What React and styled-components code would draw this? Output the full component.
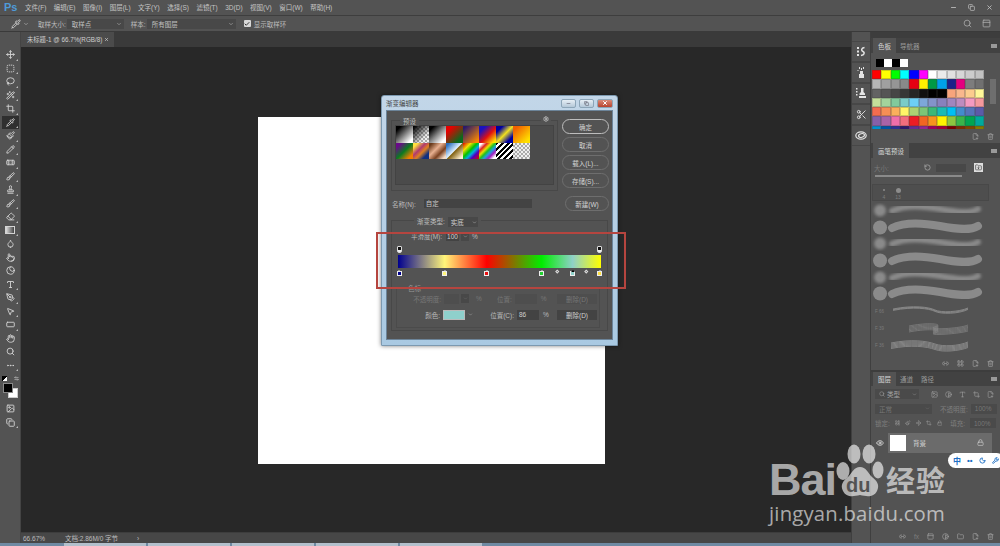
import React from 'react'
import styled, { createGlobalStyle } from 'styled-components'
import {
  Move, SquareDashed, Lasso, WandSparkles, Crop, Pipette, Paintbrush, Pencil, Bandage, Brush,
  Stamp, Eraser, Droplet, Pointer, Eclipse, Type, PenTool, MousePointer2, RectangleHorizontal,
  Hand, Search, Ellipsis, ChevronDown, Settings, Minus, Copy, X, Eye, Lock, Link2, Trash2,
  Folder, FilePlus2, RotateCcw, Moon, Wrench, PanelTop, LayoutGrid, Contrast,
  Image as ImageIcon, Scissors, ArrowLeftRight, FolderDown, Check,
} from 'lucide-react'

const GlobalStyle = createGlobalStyle`
  html, body {
    margin: 0;
    width: 1000px;
    height: 546px;
    overflow: hidden;
    background: #535353;
    font-family: "Liberation Sans", "Noto Sans CJK SC", sans-serif;
    font-size: 6.5px;
    color: #c8c8c8;
  }
  * { box-sizing: border-box; }
`

const Shell = styled.div`
  position: relative;
  width: 1000px;
  height: 546px;
  display: flex;
  flex-direction: column;
  overflow: hidden;
`

const MenuBar = styled.div`
  height: 16px;
  flex: none;
  display: flex;
  align-items: center;
  padding-left: 4px;
  border-bottom: 1px solid #3e3e3e;
`
const PsLogo = styled.b`
  width: 21px;
  font-size: 11px;
  line-height: 1;
  color: #4f9bd9;
`
const MenuList = styled.div`
  display: flex;
  align-items: baseline;
  gap: 7.5px;
  flex: 1;
`
const MenuItem = styled.span`
  white-space: nowrap;
  line-height: 10px;
  color: #c4c4c4;
`
const WindowButtons = styled.div`
  display: flex;
  gap: 11px;
  padding-right: 7px;
  color: #bdbdbd;
`

const OptionsBar = styled.div`
  height: 16px;
  flex: none;
  display: flex;
  align-items: center;
  padding-left: 11px;
  border-bottom: 1px solid #3a3a3a;
`
const OptionLabel = styled.span`
  white-space: nowrap;
  margin-left: ${p => p.$left || 0}px;
  color: #bcbcbc;
`
const OptionSelect = styled.div`
  width: ${p => p.$w}px;
  height: 10px;
  margin-left: 1px;
  padding: 0 2px 0 5px;
  display: flex;
  align-items: center;
  justify-content: space-between;
  background: #484848;
  color: #c0c0c0;
`
const CheckMark = styled.span`
  width: 7px;
  height: 7px;
  margin: 0 3px 0 8px;
  display: flex;
  align-items: center;
  justify-content: center;
  border-radius: 1px;
  background: #d8d8d8;
  color: #333;
`
const OptionsEnd = styled.div`
  margin-left: auto;
  display: flex;
  align-items: center;
  gap: 10px;
  padding-right: 9px;
  color: #b0b0b0;
`

const Main = styled.div`
  flex: 1;
  min-height: 0;
  display: grid;
  grid-template-columns: 21px 830px 20px 129px;
`

const ToolBar = styled.div`
  display: flex;
  flex-direction: column;
  align-items: center;
  padding-top: 16px;
  background: #535353;
  border-right: 1px solid #444;
`
const ToolSlot = styled.div`
  position: relative;
  width: 17px;
  height: 13.5px;
  flex: none;
  display: flex;
  align-items: center;
  justify-content: center;
  color: #d4d4d4;
  background: ${p => (p.$active ? '#2f2f2f' : 'transparent')};
  &::after {
    content: '';
    position: absolute;
    right: 1px;
    bottom: 1px;
    border-left: 2px solid transparent;
    border-bottom: 2px solid #bbb;
    display: ${p => (p.$more ? 'block' : 'none')};
  }
`
const GradientGlyph = styled.span`
  width: 10px;
  height: 8px;
  border: 1px solid #d4d4d4;
  background: linear-gradient(90deg, #ddd, #444);
`
const SwapRow = styled.div`
  width: 17px;
  height: 8px;
  margin-top: 2px;
  display: flex;
  align-items: center;
  justify-content: space-between;
  color: #d0d0d0;
`
const MiniDefault = styled.span`
  width: 5px;
  height: 5px;
  background: linear-gradient(135deg, #000 50%, #fff 50%);
`
const ColorChips = styled.div`
  position: relative;
  width: 15px;
  height: 15px;
  margin: 1px 0 4px;
`
const ColorChip = styled.span`
  position: absolute;
  width: 10px;
  height: 10px;
  border: 1px solid ${p => (p.$fore ? '#888' : '#ccc')};
  background: ${p => (p.$fore ? '#000' : '#fff')};
  top: ${p => (p.$fore ? 0 : 5)}px;
  left: ${p => (p.$fore ? 0 : 5)}px;
  z-index: ${p => (p.$fore ? 1 : 0)};
`

const Center = styled.div`
  display: flex;
  flex-direction: column;
  min-width: 0;
`
const TabStrip = styled.div`
  height: 15px;
  flex: none;
  display: flex;
  background: #3a3a3a;
`
const DocTab = styled.div`
  width: 93px;
  display: flex;
  align-items: center;
  justify-content: space-between;
  padding: 0 5px 0 6px;
  background: #4b4b4b;
  color: #cfcfcf;
  font-size: 6.3px;
  white-space: nowrap;
`
const CanvasArea = styled.div`
  flex: 1;
  min-height: 0;
  padding: 70px 0 0 237px;
  background: #282828;
`
const Page = styled.div`
  width: 347px;
  height: 347px;
  background: #fff;
`
const StatusBar = styled.div`
  height: 11px;
  flex: none;
  display: flex;
  align-items: center;
  padding-left: 2px;
  background: #474747;
  border-top: 1px solid #3d3d3d;
  color: #bdbdbd;
`
const StatusPart = styled.span`
  width: ${p => p.$w}px;
  white-space: nowrap;
`

const Dock = styled.div`
  padding-top: 9px;
  background: #535353;
  border-left: 1px solid #3f3f3f;
  border-right: 1px solid #3f3f3f;
`
const DockButton = styled.div`
  height: 21px;
  display: flex;
  align-items: center;
  justify-content: center;
  border-top: 1px solid #474747;
  border-bottom: 1px solid #474747;
  color: #e4e4e4;
`

const Panels = styled.div`
  display: flex;
  flex-direction: column;
  padding-top: 6px;
  background: #3d3d3d;
`
const Panel = styled.div`
  height: ${p => p.$h}px;
  flex: none;
  display: flex;
  flex-direction: column;
  background: #535353;
  margin-bottom: ${p => p.$gap || 0}px;
`
const PanelTabs = styled.div`
  height: ${p => p.$h || 15}px;
  flex: none;
  display: flex;
  align-items: stretch;
  padding-left: 2px;
  background: #424242;
`
const PanelTab = styled.div`
  display: flex;
  align-items: center;
  padding: 0 ${p => p.$pad || 4}px;
  background: ${p => (p.$active ? '#535353' : 'transparent')};
  color: ${p => (p.$active ? '#d8d8d8' : '#9a9a9a')};
  white-space: nowrap;
`
const PanelMenu = styled.span`
  width: 6px;
  height: 4px;
  margin: auto 3px auto auto;
  background: #9a9a9a;
`
const PanelFooter = styled.div`
  height: 13px;
  flex: none;
  display: flex;
  justify-content: flex-end;
  align-items: center;
  gap: 8px;
  padding-right: 6px;
  margin-top: auto;
  color: #a8a8a8;
`

const DefaultSwatches = styled.div`
  display: flex;
  padding: 6px 0 3px 5px;
`
const MainSwatch = styled.span`
  width: 8px;
  height: 8px;
  background: ${p => p.$c};
`
const SwatchWrap = styled.div`
  display: flex;
  height: 59px;
`
const SwatchGrid = styled.div`
  width: 112px;
  margin-left: 1px;
  height: 59px;
  overflow: hidden;
  display: grid;
  grid-template-columns: repeat(12, 1fr);
  grid-auto-rows: 9.3px;
`
const Swatch = styled.span`
  background: ${p => p.$c};
  border: 0.5px solid rgba(60, 60, 60, .25);
`
const ScrollTrack = styled.div`
  width: 6px;
  margin-left: 6px;
  padding-top: 9px;
`
const ScrollThumb = styled.div`
  height: ${p => p.$h}px;
  background: #6e6e6e;
`

const SizeRow = styled.div`
  height: 17px;
  display: flex;
  align-items: center;
  padding: 2px 0 0 3px;
  color: #787878;
`
const ResetIcon = styled.span`
  margin-left: 35px;
  display: flex;
  color: #aaa;
`
const SizeField = styled.span`
  width: 30px;
  height: 8px;
  margin-left: 5px;
  background: #484848;
`
const FolderChip = styled.span`
  width: 9px;
  height: 9px;
  margin-left: 8px;
  display: flex;
  align-items: center;
  justify-content: center;
  background: #ddd;
  color: #333;
`
const SliderLine = styled.div`
  width: 87px;
  height: 2px;
  margin: 0 0 7px 4px;
  background: #8a8a8a;
`
const Thumbs = styled.div`
  width: 117px;
  height: 17px;
  margin-left: 1px;
  display: flex;
  gap: 6px;
  padding: 2px 0 0 7px;
  border: 1px solid #484848;
  background: #4e4e4e;
  color: #7d7d7d;
  font-size: 5px;
`
const ThumbCell = styled.div`
  display: flex;
  flex-direction: column;
  align-items: center;
  gap: 1px;
  width: 8px;
`
const ThumbDot = styled.span`
  width: ${p => p.$s}px;
  height: ${p => p.$s}px;
  margin: ${p => (6 - p.$s) / 2}px 0;
  border-radius: 50%;
  background: #8c8c8c;
`
const BrushList = styled.div`
  height: 153px;
  padding-top: 1px;
  overflow: hidden;
`

const SearchRow = styled.div`
  height: 14.5px;
  display: flex;
  align-items: center;
  gap: ${p => p.$gap || 6}px;
  padding: 2px 4px;
  color: #a0a0a0;
  overflow: hidden;
`
const TabGap = styled.div`
  height: 1px;
  flex: none;
`
const SmallField = styled.div`
  width: ${p => p.$w}px;
  height: 10px;
  flex: none;
  display: flex;
  align-items: center;
  justify-content: space-between;
  padding: 0 2px 0 4px;
  margin-right: ${p => p.$after || 0}px;
  background: #4a4a4a;
  color: ${p => (p.$dim ? '#777' : '#a2a2a2')};
  white-space: nowrap;
`
const FieldLabel = styled.span`
  display: flex;
  align-items: center;
  gap: 2px;
`
const DimLabel = styled.span`
  color: #7e7e7e;
  white-space: nowrap;
  margin-left: ${p => p.$left || 0}px;
`
const LayerRow = styled.div`
  height: 20px;
  margin-top: 2px;
  display: flex;
  align-items: center;
`
const EyeCell = styled.span`
  width: 17px;
  display: flex;
  justify-content: center;
  color: #dcdcdc;
`
const LayerBody = styled.div`
  width: 104px;
  height: 100%;
  display: flex;
  align-items: center;
  justify-content: flex-start;
  padding: 0 8px 0 2px;
  background: #6b6b6b;
  color: #d6d6d6;
`
const LayerThumb = styled.span`
  width: 16px;
  height: 16px;
  margin-right: 7px;
  background: #fff;
`
const LayerName = styled.span`
  flex: 1;
`

const Taskbar = styled.div`
  height: 3px;
  flex: none;
  display: flex;
  padding-left: 64px;
  gap: 2px;
  background: #6f8aa3;
`
const TaskItem = styled.span`
  width: 82px;
  background: #b3c0cc;
`

const Dialog = styled.div`
  position: absolute;
  left: 381px;
  top: 95px;
  width: 237px;
  height: 251px;
  display: flex;
  flex-direction: column;
  padding: 0 4px 5px;
  border-radius: 3px 3px 0 0;
  background: linear-gradient(#c2d6e8, #a9c9e2);
  border: 1px solid #7c99b0;
  box-shadow: 0 0 4px rgba(0, 0, 0, .5);
`
const TitleBar = styled.div`
  height: 14px;
  flex: none;
  display: flex;
  align-items: center;
  justify-content: space-between;
  color: #444;
`
const TitleButtons = styled.div`
  display: flex;
  gap: 3px;
`
const TitleButton = styled.span`
  width: ${p => (p.$close ? 16 : 15)}px;
  height: 9px;
  display: flex;
  align-items: center;
  justify-content: center;
  border-radius: 2px;
  border: 1px solid #8ca5b8;
  background: ${p => (p.$close ? 'linear-gradient(#d98a78, #b8432e)' : 'linear-gradient(#e6eef5, #b4c8d8)')};
  color: ${p => (p.$close ? '#fff' : '#667')};
`
const DialogBody = styled.div`
  flex: 1;
  display: flex;
  flex-direction: column;
  padding: 9px 3px 0 4px;
  border: 1px solid #6c8499;
  background: #535353;
`
const TopArea = styled.div`
  display: flex;
  justify-content: space-between;
`
const PresetBox = styled.fieldset`
  position: relative;
  width: 167px;
  height: 71px;
  margin: 0;
  padding: 6px 3px 0 3px;
  border: 1px solid #484848;
`
const GroupLegend = styled.span`
  position: absolute;
  top: -5px;
  left: ${p => p.$left}px;
  padding: 0 3px;
  background: #535353;
  color: ${p => (p.$dim ? '#9a9a9a' : '#bfbfbf')};
  white-space: nowrap;
`
const GearMark = styled.span`
  position: absolute;
  top: -5px;
  right: 6px;
  padding: 0 2px;
  background: #535353;
  color: #c8c8c8;
`
const PresetWell = styled.div`
  height: 60px;
  margin-top: -2px;
  display: grid;
  grid-template-columns: repeat(8, 16.7px);
  grid-auto-rows: 16.7px;
  background: #4b4b4b;
  border: 1px solid #434343;
`
const PresetThumb = styled.span`
  background: ${p => p.$bg};
`
const ButtonColumn = styled.div`
  display: flex;
  flex-direction: column;
  gap: 3px;
  margin-top: -1px;
`
const RoundButton = styled.div`
  width: ${p => p.$w || 47}px;
  height: 15px;
  flex: none;
  display: flex;
  align-items: center;
  justify-content: center;
  border-radius: 8px;
  border: 1px solid ${p => (p.$primary ? '#bdbdbd' : '#6e6e6e')};
  color: #d4d4d4;
  white-space: nowrap;
`
const NameRow = styled.div`
  display: flex;
  align-items: center;
  height: 15px;
  margin-top: 5px;
  padding-left: 1px;
  color: #bcbcbc;
  white-space: nowrap;
`
const NameInput = styled.div`
  width: 109px;
  height: 9px;
  margin: 0 33px 0 8px;
  padding-left: 2px;
  line-height: 9px;
  background: #434343;
  color: #c8c8c8;
`
const WideFieldset = styled.fieldset`
  position: relative;
  width: 217px;
  height: 111px;
  margin: 9px 0 0;
  padding: 10px 0 0;
  border: 1px solid #484848;
`
const TypeSelect = styled.span`
  display: inline-flex;
  width: 30px;
  height: 10px;
  margin-left: 3px;
  padding: 0 1px 0 3px;
  align-items: center;
  justify-content: space-between;
  background: #484848;
  color: #d0d0d0;
  vertical-align: middle;
`
const SmoothRow = styled.div`
  display: flex;
  align-items: center;
  padding-left: 19px;
  color: #bcbcbc;
  white-space: nowrap;
`
const SmoothInput = styled.span`
  width: 13px;
  height: 9px;
  margin-left: 4px;
  padding-left: 1px;
  line-height: 9px;
  background: #434343;
  color: #d0d0d0;
`
const ChevBox = styled.span`
  display: flex;
  flex: none;
  width: 8px;
  height: 9px;
  margin: 0 3px 0 2px;
  align-items: center;
  justify-content: center;
  background: #484848;
`
const StopArea = styled.div`
  position: relative;
  width: 203px;
  height: 31px;
  margin: 5px 0 0 6px;
  padding-top: 9px;
`
const GradientBar = styled.div`
  height: 13px;
  background: linear-gradient(90deg,
    #00008f 0%, #fff57a 23%, #ff0000 43.7%, #00ee00 70.8%, #8fd0c8 86%, #ffff00 100%);
`
const StopMark = styled.span`
  position: absolute;
  width: 5px;
  height: 5px;
  margin-left: -2.5px;
  top: 25px;
  background: ${p => p.$c};
  border: 0.5px solid #eee;
  &::before {
    content: '';
    position: absolute;
    left: -0.5px;
    top: -2.5px;
    border-left: 2.5px solid transparent;
    border-right: 2.5px solid transparent;
    border-bottom: 2px solid ${p => (p.$active ? '#000' : '#e8e8e8')};
  }
`
const OpacityMark = styled.span`
  position: absolute;
  width: 5px;
  height: 7px;
  margin-left: -2.5px;
  top: 0;
  background: linear-gradient(#111 65%, #eee 65%);
  border: 0.5px solid #ddd;
  border-radius: 1px 1px 2px 2px;
`
const Midpoint = styled.span`
  position: absolute;
  top: 24px;
  width: 2.5px;
  height: 2.5px;
  margin-left: -1px;
  transform: rotate(45deg);
  border: 0.5px solid #ddd;
`
const ColorGroup = styled.fieldset`
  position: relative;
  width: 204px;
  height: 41px;
  margin: 10px 0 0 4px;
  padding: 5px 0 0;
  border: 1px solid #4b4b4b;
`
const StopRow = styled.div`
  display: flex;
  align-items: center;
  height: 11px;
  margin-bottom: 5px;
  color: ${p => (p.$dim ? '#777' : '#bcbcbc')};
`
const StopLabel = styled.span`
  width: ${p => p.$w}px;
  text-align: right;
  white-space: nowrap;
  flex: none;
`
const StopInput = styled.span`
  width: ${p => p.$w}px;
  height: 10px;
  margin-left: 3px;
  padding-left: 2px;
  line-height: 10px;
  background: ${p => (p.$dim ? '#4e4e4e' : '#434343')};
  color: #cfcfcf;
  flex: none;
`
const ColorWell = styled.span`
  width: 22px;
  height: 10px;
  margin-left: 3px;
  border: 1px solid #bbb;
  background: #8fd0cc;
  flex: none;
`
const WellChevron = styled.span`
  display: flex;
  flex: none;
  margin: 0 3px;
`
const DeleteButton = styled.span`
  width: 40px;
  height: 10px;
  margin-left: auto;
  margin-right: 2px;
  display: flex;
  align-items: center;
  justify-content: center;
  background: ${p => (p.$dim ? '#4e4e4e' : '#434343')};
  color: ${p => (p.$dim ? '#777' : '#d0d0d0')};
  white-space: nowrap;
`
const Pct = styled.span`
  margin-left: ${p => p.$left || 4}px;
  flex: none;
`

const RedFrame = styled.div`
  position: absolute;
  left: 376px;
  top: 232px;
  width: 250px;
  height: 57px;
  border: 2px solid #b5453f;
`

const Ime = styled.div`
  position: absolute;
  left: 948px;
  top: 453px;
  width: 56px;
  height: 15px;
  display: flex;
  align-items: center;
  gap: 6px;
  padding-left: 5px;
  border-radius: 8px;
  background: #fff;
  color: #1d6fc4;
  font-size: 8px;
  font-weight: 700;
`
const Watermark = styled.div`
  position: absolute;
  left: 769px;
  top: 442px;
  width: 190px;
  color: rgba(255, 255, 255, .62);
`
const MarkTop = styled.div`
  display: flex;
  align-items: flex-end;
  height: 60px;
`
const BaiText = styled.span`
  font-size: 45px;
  font-weight: 700;
  letter-spacing: -1px;
  line-height: 45px;
`
const PawWrap = styled.span`
  position: relative;
  width: 48px;
  height: 56px;
  margin-bottom: 2px;
  flex: none;
`
const PawDu = styled.span`
  position: absolute;
  left: 10px;
  top: 31px;
  font-size: 20px;
  line-height: 1;
  font-weight: 700;
  color: #535353;
`
const JingYan = styled.span`
  font-size: 29px;
  font-weight: 700;
  letter-spacing: 1px;
  line-height: 40px;
  margin-left: 2px;
  white-space: nowrap;
`
const SiteUrl = styled.div`
  font-family: "Open Sans", "Liberation Sans", sans-serif;
  font-size: 20.3px;
  line-height: 22px;
  letter-spacing: .2px;
  white-space: nowrap;
`

const menus = ['文件(F)', '编辑(E)', '图像(I)', '图层(L)', '文字(Y)', '选择(S)', '滤镜(T)', '3D(D)', '视图(V)', '窗口(W)', '帮助(H)']

const Ic = ({ as: Icon, s = 9, w = 2.4 }) => <Icon size={s} strokeWidth={w} />

const tools = [
  { i: Move, more: true }, { i: SquareDashed, more: true }, { i: Lasso, more: true }, { i: WandSparkles, more: true },
  { i: Crop, more: true }, { i: Pipette, more: true, active: true }, { i: Paintbrush, more: true }, { i: Pencil, more: true },
  { i: Bandage, more: true }, { i: Brush, more: true }, { i: Stamp, more: true }, { i: Brush, more: true },
  { i: Eraser, more: true }, { grad: true, more: true }, { i: Droplet }, { i: Pointer }, { i: Eclipse },
  { i: Type, more: true }, { i: PenTool, more: true }, { i: MousePointer2, more: true }, { i: RectangleHorizontal, more: true },
  { i: Hand }, { i: Search }, { i: Ellipsis, more: true },
]

const HistoryGlyph = () => (
  <svg width="11" height="11" viewBox="0 0 11 11" fill="none" stroke="currentColor">
    <path d="M2 1v2M2 4.5v2M2 8v2" strokeWidth="2" />
    <path d="M8.5 1.5C5 2 5 4.5 7 5.5s1.5 3.5-2 4" strokeWidth="1.5" />
  </svg>
)
const BrushGlyph = () => (
  <svg width="11" height="12" viewBox="0 0 11 12" fill="currentColor">
    <path d="M3 0h1v2H3zM5 1h1v2H5zM7 0h1v2H7zM1.5 3h1v1h-1z" />
    <path d="M4 4h3v3h1v4H3V7h1z" />
  </svg>
)
const StampGlyph = () => (
  <svg width="12" height="11" viewBox="0 0 12 11" fill="currentColor">
    <path d="M1 0h1.5v1.5H1zM1 3h1.5v1.5H1zM1 6h1.5v1.5H1z" />
    <path d="M6 0h2.5v4l1.5 1.5v1.5H4.5V5.5L6 4zM4 8h7v2H4z" />
  </svg>
)
const LensGlyph = () => (
  <svg width="12" height="9" viewBox="0 0 12 9" fill="none" stroke="currentColor" strokeWidth="1.2">
    <ellipse cx="6" cy="4.5" rx="5.2" ry="3.7" />
    <ellipse cx="6.5" cy="4.5" rx="3" ry="1.8" transform="rotate(-15 6.5 4.5)" />
  </svg>
)

const swatches = [
  '#ff0000', '#ffff00', '#00ff00', '#00ffff', '#0000ff', '#ff00ff', '#ffffff', '#ebebeb', '#e1e1e1', '#d7d7d7', '#cccccc', '#c2c2c2',
  '#b7b7b7', '#a0a0a0', '#959595', '#898989', '#e60012', '#fff100', '#009944', '#00a0e9', '#1d2088', '#e4007f', '#7d7d7d', '#707070',
  '#636363', '#555555', '#464646', '#363636', '#262626', '#111111', '#000000', '#000000', '#f7a47c', '#f9b78d', '#fccc8e', '#fff799',
  '#c4df9b', '#a3d39c', '#82ca9c', '#7accc8', '#6dcff6', '#7da7d9', '#8393ca', '#8781bd', '#a186be', '#bd8cbf', '#f49ac1', '#f5989d',
  '#f26c4f', '#f68e55', '#fbaf5c', '#fff467', '#acd372', '#7cc576', '#3bb878', '#1abbb4', '#00bff3', '#438ccb', '#5574b9', '#5c5aa8',
  '#8560a8', '#a863a8', '#f06eaa', '#f26d7d', '#ed1c24', '#f26522', '#f7941d', '#fff200', '#8dc63f', '#39b54a', '#00a651', '#00a99d',
  '#0090d0', '#0054a6', '#2e3192', '#2e1a6b', '#662d91', '#92278f', '#9e005d', '#9e0039', '#790000', '#7b2e00', '#7d4900', '#827b00',
]

const checker = 'repeating-conic-gradient(#aaa 0 25%, #eee 0 50%) 0 0 / 4px 4px'

const presets = [
  'linear-gradient(135deg, #000 15%, #fff 85%)',
  `linear-gradient(135deg, #000 5%, transparent 70%), ${checker}`,
  'linear-gradient(135deg, #000 15%, #888 50%, #fff 85%)',
  'linear-gradient(135deg, #e60000 20%, #0a6a1e 80%)',
  'linear-gradient(135deg, #2a1a6a 10%, #ff8a00 90%)',
  'linear-gradient(135deg, #1a12c0 20%, #e01010 55%, #ffe000 90%)',
  'linear-gradient(135deg, #0000a0 20%, #f0e020 50%, #0000a0 80%)',
  'linear-gradient(135deg, #f06000 15%, #ffe000 85%)',
  'linear-gradient(135deg, #6a0a8a 15%, #0a7a20 50%, #f08000 85%)',
  'linear-gradient(135deg, #ffe040 15%, #b03a70 40%, #e08020 58%, #103080 80%)',
  'linear-gradient(135deg, #6a3a1a 10%, #e8b090 40%, #7a4020 65%, #f5dcc8 90%)',
  'linear-gradient(135deg, #2a70c0 10%, #dff0ff 48%, #806010 52%, #fff0d0 90%)',
  'linear-gradient(135deg, #e00000, #f0e000 25%, #00c000 45%, #00b0e0 60%, #5000c0 75%, #e00000)',
  'linear-gradient(135deg, #fff 10%, #e02020 25%, #f0e000 38%, #20c020 50%, #20a0e0 62%, #a020c0 75%, #fff 90%)',
  'repeating-linear-gradient(135deg, #000 0 2px, #fff 2px 4px)',
  checker,
]

const stops = [
  { p: 0.5, c: '#00008f' },
  { p: 23, c: '#fff57a' },
  { p: 43.7, c: '#e81010' },
  { p: 70.8, c: '#20d030' },
  { p: 86, c: '#8fd0c8', active: true },
  { p: 99.5, c: '#ffe040' },
]

const softFilter = 'url(#soft)'
const wave = 'M2 9 C 14 3, 34 4, 50 7 S 80 12, 88 7'

const brushes = [
  { soft: true, w: 6 }, { soft: false, w: 8 }, { soft: true, w: 6 }, { soft: false, w: 8 },
  { soft: true, w: 6 }, { soft: false, w: 8 },
]

const BrushRow = ({ soft, w }) => (
  <svg width="129" height="16.7" viewBox="0 0 129 16.7" style={{ display: 'block' }}>
    <circle cx="9" cy="8.5" r={soft ? 6 : 7} fill="#8a8a8a" filter={soft ? softFilter : undefined} />
    <path d={wave} transform="translate(19 0)" fill="none" stroke="#8a8a8a" strokeWidth={w} strokeLinecap="round" filter={soft ? softFilter : undefined} />
  </svg>
)

const TextureRow = ({ count, spread, x, label, sw }) => (
  <svg width="129" height="16.7" viewBox="0 0 129 16.7" style={{ display: 'block' }}>
    {Array.from({ length: count }, (_, k) => (
      <path
        key={k}
        d={`M${x} ${7 + k * spread} C ${x + 20} ${3 + k * spread}, ${x + 36} ${5 + k * spread}, 64 ${8 + k * spread} S 88 ${10 + k}, 97 ${6 + k * spread}`}
        fill="none"
        stroke="#8a8a8a"
        strokeWidth={sw}
        opacity=".9"
      />
    ))}
    <text x="4" y="11" fontSize="4.5" fill="#7a7a7a">{label}</text>
  </svg>
)

const PawMark = () => (
  <svg width="48" height="56" viewBox="0 0 48 56" fill="currentColor">
    <ellipse cx="7" cy="27" rx="6.5" ry="9" />
    <ellipse cx="18" cy="10" rx="6.5" ry="9.5" />
    <ellipse cx="33" cy="10" rx="6.5" ry="9.5" />
    <ellipse cx="42" cy="26" rx="5.5" ry="8.5" />
    <path d="M24 23c-6 0-8 6-12 10-5 4-8 8-5 14 3 6 9 6 17 4 8 2 14 2 17-4 3-6 0-10-5-14-4-4-6-10-12-10z" />
  </svg>
)

export default function App() {
  return (
    <Shell>
      <GlobalStyle />
      <MenuBar>
        <PsLogo>Ps</PsLogo>
        <MenuList>
          {menus.map(m => <MenuItem key={m}>{m}</MenuItem>)}
        </MenuList>
        <WindowButtons>
          <Minus size={7} strokeWidth={3} />
          <Copy size={7} strokeWidth={2.5} />
          <X size={7} strokeWidth={3} />
        </WindowButtons>
      </MenuBar>

      <OptionsBar>
        <Pipette size={10} strokeWidth={2} color="#ddd" />
        <ChevronDown size={6} strokeWidth={2} style={{ margin: '0 9px 0 2px' }} />
        <OptionLabel>取样大小:</OptionLabel>
        <OptionSelect $w={57}>取样点<ChevronDown size={6} /></OptionSelect>
        <OptionLabel $left={7}>样本:</OptionLabel>
        <OptionSelect $w={89}>所有图层<ChevronDown size={6} /></OptionSelect>
        <CheckMark><Check size={6} strokeWidth={4} /></CheckMark>
        <OptionLabel>显示取样环</OptionLabel>
        <OptionsEnd>
          <Search size={9} strokeWidth={2} />
          <PanelTop size={9} strokeWidth={2} />
        </OptionsEnd>
      </OptionsBar>

      <Main>
        <ToolBar>
          {tools.map((t, i) => (
            <ToolSlot key={i} $active={t.active} $more={t.more}>
              {t.grad ? <GradientGlyph /> : <Ic as={t.i} />}
            </ToolSlot>
          ))}
          <SwapRow><MiniDefault /><ArrowLeftRight size={5} strokeWidth={2.5} /></SwapRow>
          <ColorChips>
            <ColorChip $fore />
            <ColorChip />
          </ColorChips>
          <ToolSlot><Ic as={ImageIcon} /></ToolSlot>
          <ToolSlot $more><Ic as={Copy} /></ToolSlot>
        </ToolBar>

        <Center>
          <TabStrip>
            <DocTab>未标题-1 @ 66.7%(RGB/8) <X size={5} strokeWidth={3} /></DocTab>
          </TabStrip>
          <CanvasArea>
            <Page />
          </CanvasArea>
          <StatusBar>
            <StatusPart $w={42}>66.67%</StatusPart>
            <StatusPart $w={72}>文档:2.86M/0 字节</StatusPart>
            <StatusPart $w={10}>›</StatusPart>
          </StatusBar>
        </Center>

        <Dock>
          <DockButton><HistoryGlyph /></DockButton>
          <DockButton><BrushGlyph /></DockButton>
          <DockButton><StampGlyph /></DockButton>
          <DockButton><Scissors size={11} strokeWidth={2} /></DockButton>
          <DockButton><LensGlyph /></DockButton>
        </Dock>

        <Panels>
          <Panel $h={105}>
            <PanelTabs>
              <PanelTab $active $pad={5}>色板</PanelTab>
              <PanelTab>导航器</PanelTab>
              <PanelMenu />
            </PanelTabs>
            <DefaultSwatches>
              {['#000', '#fff', '#000', '#fff'].map((c, i) => <MainSwatch key={i} $c={c} />)}
            </DefaultSwatches>
            <SwatchWrap>
              <SwatchGrid>
                {swatches.map((c, i) => <Swatch key={i} $c={c} />)}
              </SwatchGrid>
              <ScrollTrack><ScrollThumb $h={25} /></ScrollTrack>
            </SwatchWrap>
            <PanelFooter>
              <FilePlus2 size={7} strokeWidth={2} />
              <Trash2 size={7} strokeWidth={2} />
            </PanelFooter>
          </Panel>

          <Panel $h={227} $gap={2}>
            <PanelTabs>
              <PanelTab $active $pad={5}>画笔预设</PanelTab>
              <PanelMenu />
            </PanelTabs>
            <SizeRow>
              大小:
              <ResetIcon><RotateCcw size={7} strokeWidth={2.5} /></ResetIcon>
              <SizeField />
              <FolderChip><FolderDown size={7} strokeWidth={2} /></FolderChip>
            </SizeRow>
            <SliderLine />
            <Thumbs>
              <ThumbCell><ThumbDot $s={2} />4</ThumbCell>
              <ThumbCell><ThumbDot $s={5} />13</ThumbCell>
            </Thumbs>
            <BrushList>
              {brushes.map((b, i) => <BrushRow key={i} {...b} />)}
              <TextureRow count={3} spread={0.7} label="F 66" x={22} sw={1} />
              <TextureRow count={6} spread={1.2} label="F 39" x={38} sw={0.7} />
              <TextureRow count={6} spread={1.1} label="F 36" x={20} sw={1} />
            </BrushList>
            <svg width="0" height="0" style={{ position: 'absolute' }}>
              <filter id="soft"><feGaussianBlur stdDeviation="1.4" /></filter>
            </svg>
            <PanelFooter>
              <Link2 size={7} strokeWidth={2} />
              <LayoutGrid size={7} strokeWidth={2} />
              <FilePlus2 size={7} strokeWidth={2} />
              <Trash2 size={7} strokeWidth={2} />
            </PanelFooter>
          </Panel>

          <Panel $h={171}>
            <PanelTabs $h={14}>
              <PanelTab $active $pad={5}>图层</PanelTab>
              <PanelTab>通道</PanelTab>
              <PanelTab>路径</PanelTab>
              <PanelMenu />
            </PanelTabs>
            <TabGap />
            <SearchRow $gap={7}>
              <SmallField $w={44} $after={5}><FieldLabel><Search size={6} />类型</FieldLabel><ChevronDown size={5} /></SmallField>
              <ImageIcon size={7} /><Contrast size={7} /><Type size={7} /><Crop size={7} /><FilePlus2 size={7} />
            </SearchRow>
            <SearchRow $gap={3}>
              <SmallField $w={57} $after={5} $dim>正常<ChevronDown size={5} /></SmallField>
              <DimLabel>不透明度:</DimLabel>
              <SmallField $w={26} $dim>100%</SmallField>
            </SearchRow>
            <SearchRow $gap={5}>
              <DimLabel>锁定:</DimLabel>
              <LayoutGrid size={6} /><Paintbrush size={6} /><Move size={6} /><Crop size={6} /><Lock size={6} />
              <DimLabel $left={3}>填充:</DimLabel>
              <SmallField $w={26} $dim>100%</SmallField>
            </SearchRow>
            <LayerRow>
              <EyeCell><Eye size={8} strokeWidth={2.5} /></EyeCell>
              <LayerBody>
                <LayerThumb />
                <LayerName>背景</LayerName>
                <Lock size={7} strokeWidth={2} />
              </LayerBody>
            </LayerRow>
            <PanelFooter>
              <Link2 size={7} strokeWidth={2} />
              <DimLabel>fx</DimLabel>
              <PanelTop size={7} strokeWidth={2} />
              <Contrast size={7} strokeWidth={2} />
              <Folder size={7} strokeWidth={2} />
              <FilePlus2 size={7} strokeWidth={2} />
              <Trash2 size={7} strokeWidth={2} />
            </PanelFooter>
          </Panel>
        </Panels>
      </Main>

      <Taskbar>
        {[0, 1, 2, 3, 4].map(i => <TaskItem key={i} />)}
      </Taskbar>

      <Dialog>
        <TitleBar>
          渐变编辑器
          <TitleButtons>
            <TitleButton><Minus size={5} strokeWidth={3} /></TitleButton>
            <TitleButton><Copy size={5} strokeWidth={3} /></TitleButton>
            <TitleButton $close><X size={6} strokeWidth={4} /></TitleButton>
          </TitleButtons>
        </TitleBar>
        <DialogBody>
          <TopArea>
            <PresetBox>
              <GroupLegend $left={8}>预设</GroupLegend>
              <GearMark><Settings size={6} strokeWidth={3} /></GearMark>
              <PresetWell>
                {presets.map((bg, i) => <PresetThumb key={i} $bg={bg} />)}
              </PresetWell>
            </PresetBox>
            <ButtonColumn>
              <RoundButton $primary>确定</RoundButton>
              <RoundButton>取消</RoundButton>
              <RoundButton>载入(L)...</RoundButton>
              <RoundButton>存储(S)...</RoundButton>
            </ButtonColumn>
          </TopArea>
          <NameRow>
            名称(N):
            <NameInput>自定</NameInput>
            <RoundButton $w={44}>新建(W)</RoundButton>
          </NameRow>
          <WideFieldset>
            <GroupLegend $left={22}>
              渐变类型:
              <TypeSelect>实底<ChevronDown size={5} /></TypeSelect>
            </GroupLegend>
            <SmoothRow>
              平滑度(M):
              <SmoothInput>100</SmoothInput>
              <ChevBox><ChevronDown size={5} /></ChevBox>
              %
            </SmoothRow>
            <StopArea>
              <OpacityMark style={{ left: '0.5%' }} />
              <OpacityMark style={{ left: '99.5%' }} />
              <GradientBar />
              {stops.map(s => (
                <StopMark key={s.p} $c={s.c} $active={s.active} style={{ left: `${s.p}%` }} />
              ))}
              <Midpoint style={{ left: '78.5%' }} />
              <Midpoint style={{ left: '92.5%' }} />
            </StopArea>
            <ColorGroup>
              <GroupLegend $left={8} $dim>色标</GroupLegend>
              <StopRow $dim>
                <StopLabel $w={44}>不透明度:</StopLabel>
                <StopInput $w={15} $dim />
                <ChevBox><ChevronDown size={5} /></ChevBox>
                <Pct>%</Pct>
                <StopLabel $w={30}>位置:</StopLabel>
                <StopInput $w={22} $dim />
                <Pct>%</Pct>
                <DeleteButton $dim>删除(D)</DeleteButton>
              </StopRow>
              <StopRow>
                <StopLabel $w={43}>颜色:</StopLabel>
                <ColorWell />
                <WellChevron><ChevronDown size={5} /></WellChevron>
                <StopLabel $w={38}>位置(C):</StopLabel>
                <StopInput $w={22}>86</StopInput>
                <Pct>%</Pct>
                <DeleteButton>删除(D)</DeleteButton>
              </StopRow>
            </ColorGroup>
          </WideFieldset>
        </DialogBody>
      </Dialog>

      <RedFrame />

      <Ime>
        中<span>••</span><Moon size={7} strokeWidth={3} /><Wrench size={7} strokeWidth={3} />
      </Ime>

      <Watermark>
        <MarkTop>
          <BaiText>Bai</BaiText>
          <PawWrap>
            <PawMark />
            <PawDu>du</PawDu>
          </PawWrap>
          <JingYan>经验</JingYan>
        </MarkTop>
        <SiteUrl>jingyan.baidu.com</SiteUrl>
      </Watermark>
    </Shell>
  )
}
